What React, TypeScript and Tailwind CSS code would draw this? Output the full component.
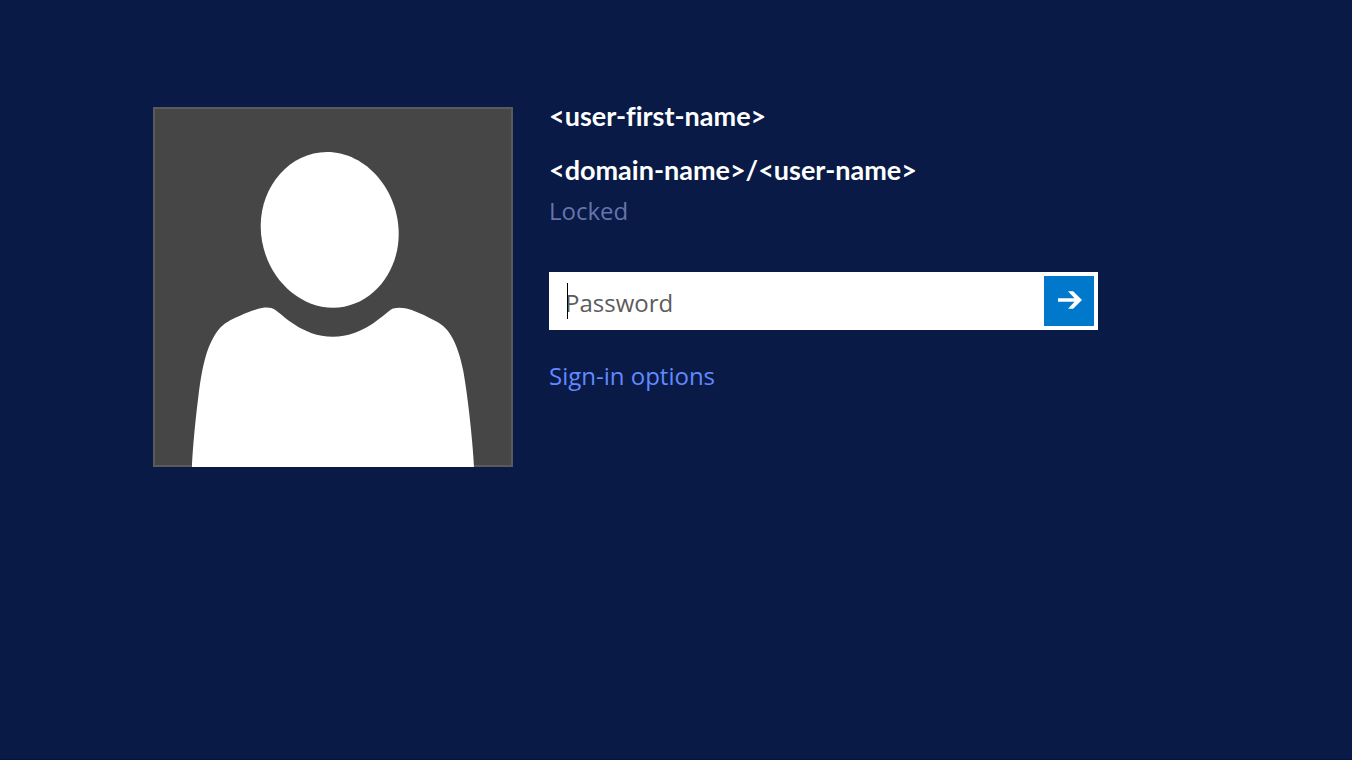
import { useState } from "react";
import type { FormEvent } from "react";

function Avatar() {
  return (
    <svg
      viewBox="0 0 360 360"
      role="img"
      aria-label="User picture"
      className="block size-90 shrink-0"
    >
      <rect width="360" height="360" fill="#5a5a5a" />
      <rect x="2" y="2" width="356" height="356" fill="#464646" />
      <path
        fill="#fff"
        d="M174 45C213 45 245.700 83 245.700 127C245.700 167 217 200.700 180 200.700C141 200.700 107.700 163 107.700 119C107.700 79 137 45 174 45Z"
      />
      <path
        fill="#fff"
        d="M39 360C39.500 344 42.500 312 45.300 290C49.500 257 54 238 65.300 223C71 216 77 213 87 208.700C93 206 98 204 103.700 202.300C111 200 118 200 122 202.700C129 207 149 229.700 180 229.700C210 229.700 230 208 237.700 202.700C242 200 250 200 258.700 203C267 206 275 210 282 213.700C290 217.500 295 223 298.700 229.700C304 239 307.500 250 310.300 264C316 296 320.500 345 321 360Z"
      />
    </svg>
  );
}

function SubmitArrow() {
  return (
    <svg viewBox="0 0 26 20" aria-hidden="true" className="h-5 w-[26px]">
      <path
        fill="#fff"
        d="M2 7.200H18.500L12 0.300H17.200L26 9L17.200 17.700H12L18.500 10.800H2Z"
      />
    </svg>
  );
}

export default function App() {
  const [password, setPassword] = useState("");
  const onSubmit = (event: FormEvent) => event.preventDefault();

  return (
    <div className="flex min-h-screen flex-col border-b border-[#07143a] bg-[#081a45] font-['Open_Sans','Noto_Sans',sans-serif] text-2xl">
      <main className="flex grow items-start gap-9 pr-6 pl-[153px] pt-[107px]">
        <Avatar />
        <div className="flex max-w-[549px] min-w-0 grow flex-col">
          <h1 className="-mt-[9px] font-[Lato,sans-serif] text-[27px] leading-9 font-bold text-white [font-variant-ligatures:none]">
            &lt;user-first-name&gt;
          </h1>
          <p className="mt-[18px] font-[Lato,sans-serif] text-[27px] leading-9 font-bold text-white">
            &lt;domain-name&gt;/&lt;user-name&gt;
          </p>
          <p className="mt-[5px] leading-9 text-[#6673ac]">Locked</p>
          <form onSubmit={onSubmit} className="relative mt-[43px] flex bg-white p-1">
            <input
              type="password"
              aria-label="Password"
              placeholder="Password"
              value={password}
              onChange={(event) => setPassword(event.target.value)}
              className="h-[50px] min-w-0 grow bg-transparent pt-0.5 pl-3 text-[#222] caret-transparent outline-none placeholder:text-[#5c5c5c]"
            />
            <span aria-hidden="true" className="absolute top-[11px] left-[18px] h-9 w-px bg-black" />
            <button
              type="submit"
              aria-label="Submit"
              className="flex size-[50px] shrink-0 items-center justify-center bg-[#0078cb]"
            >
              <SubmitArrow />
            </button>
          </form>
          <a href="#options" className="mt-7 self-start leading-9 text-[#6289ff]">
            Sign-in options
          </a>
        </div>
      </main>
    </div>
  );
}
